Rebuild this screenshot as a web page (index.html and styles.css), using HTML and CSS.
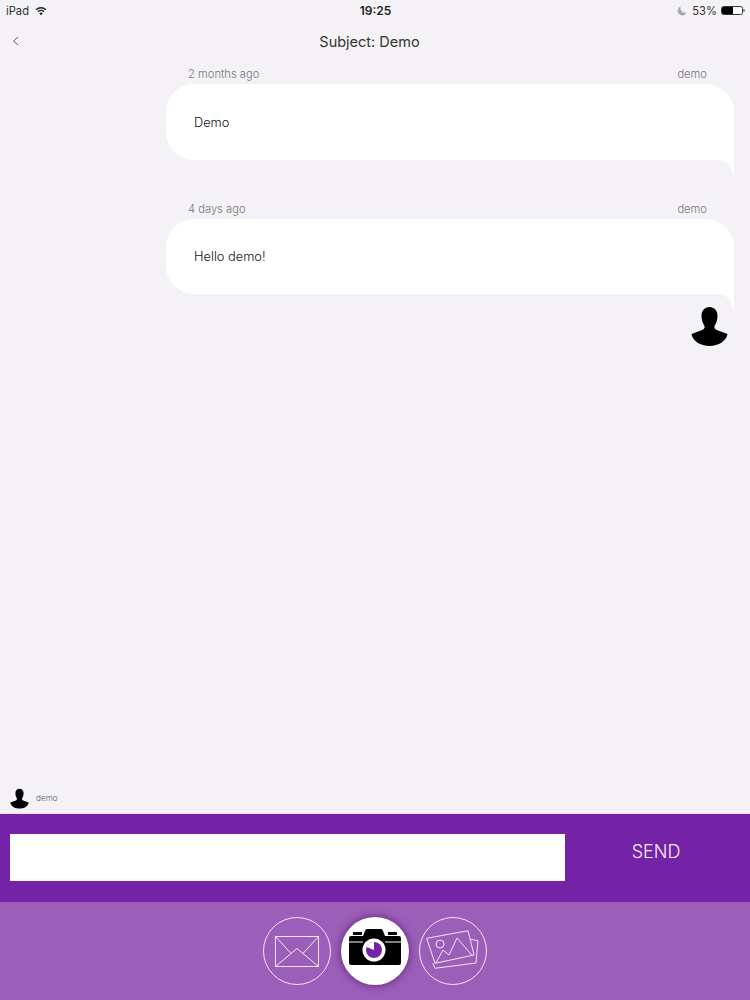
FILE: index.html
```html
<!DOCTYPE html>
<html lang="en">
<head>
  <meta charset="UTF-8" />
  <meta name="viewport" content="width=device-width, initial-scale=1.0"/>
  <title>Subject: Demo</title>
  <link rel="stylesheet" href="styles.css">
</head>
<body>
  <div class="page">
    <div class="status-bar">
      <div class="status-left">
        <span>iPad</span>
        <svg class="wifi" width="12" height="10" viewBox="0 0 14 11">
          <path d="M7 10.6 4.900 8.200a3 3 0 0 1 4.200 0z" fill="#222"/>
          <path d="M3.500 6.400a5 5 0 0 1 7 0M1.300 4a8.200 8.200 0 0 1 11.400 0" fill="none" stroke="#222" stroke-width="1.600"/>
        </svg>
      </div>
      <div class="status-time">19:25</div>
      <div class="status-right">
        <svg class="moon" width="10" height="10" viewBox="0 0 10 10">
          <path d="M3.600.6a4.600 4.600 0 1 0 5.900 6.100A5 5 0 0 1 3.600.6z" fill="#aaa"/>
        </svg>
        <span>53%</span>
        <svg class="battery" width="24" height="9" viewBox="0 0 24 9">
          <rect x=".5" y=".5" width="21" height="8" rx="2" fill="#fff" stroke="#333"/>
          <path d="M1 2.500a1.500 1.500 0 0 1 1.500-1.500H12v7H2.500A1.500 1.500 0 0 1 1 6.500z" fill="#000"/>
          <path d="M22.500 3c.9.200 1.200.8 1.200 1.500s-.3 1.300-1.200 1.500z" fill="#333"/>
        </svg>
      </div>
    </div>

    <div class="nav-bar">
      <svg class="back" width="7" height="10" viewBox="0 0 7 10">
        <path d="M6 1 1.500 5 6 9" fill="none" stroke="#555" stroke-width="1"/>
      </svg>
      <div class="nav-title">Subject: Demo</div>
    </div>

    <div class="thread">
      <div class="message">
        <div class="meta"><span>2 months ago</span><span>demo</span></div>
        <div class="bubble">Demo</div>
      </div>
      <div class="message">
        <div class="meta"><span>4 days ago</span><span>demo</span></div>
        <div class="bubble">Hello demo!</div>
      </div>
      <svg class="avatar avatar-large" viewBox="0 0 37 40">
        <use href="#person"/>
      </svg>
    </div>

    <div class="sender">
      <svg class="avatar avatar-small" viewBox="0 0 37 40">
        <use href="#person"/>
      </svg>
      <span>demo</span>
    </div>

    <div class="compose">
      <input class="compose-input" type="text" />
      <div class="send">SEND</div>
    </div>

    <div class="tabs">
      <div class="tab">
        <svg width="44" height="31" viewBox="0 0 44 31" fill="none" stroke="#f6e3f7" stroke-width="1">
          <rect x=".5" y=".5" width="43" height="30"/>
          <path d="M.5 30.500 22 12.500l21.500 18M.5.5 16 17.500M43.500.5 28 17.500"/>
        </svg>
      </div>
      <div class="tab tab-active">
        <svg width="52" height="44" viewBox="0 0 52 44">
          <path d="M4 3h9v3H4zM39 3h9v3h-9zM14 7l2-5c.3-1 1-2 2-2h14c1 0 1.700 1 2 2l2 5h14a2 2 0 0 1 2 2v25a2 2 0 0 1-2 2H2a2 2 0 0 1-2-2V9a2 2 0 0 1 2-2z" fill="#000"/>
          <path d="M0 13h14M36 13h16" stroke="#fff" stroke-width="1"/>
          <circle cx="25" cy="21" r="11.500" fill="#fff"/>
          <circle cx="25" cy="21" r="8" fill="#7422a6"/>
          <path d="M25 21v-8a8 8 0 0 0-7.500 5z" fill="#fff"/>
        </svg>
      </div>
      <div class="tab">
        <svg width="54" height="44" viewBox="0 0 54 44" fill="none" stroke="#f6e3f7" stroke-width="1">
          <path d="M.7 9.300 42 1.700 48 26 9 34.300z"/>
          <path d="M44 10.300 52 11.700 50 34 9 39.300 6.700 34"/>
          <circle cx="14" cy="15" r="4"/>
          <path d="M10 33.700 17 21l6 5 8-17 14.700 17"/>
        </svg>
      </div>
    </div>
  </div>

  <svg class="sprites" width="0" height="0">
    <symbol id="person" viewBox="0 0 37 40">
      <path d="M18.500 1c4.800 0 8 3.500 8 9 0 4.500-1.500 7.500-3 10-.8 2 1 3.500 3.500 4.500 3.300 1.300 6.500 2.500 9.500 3.500C35.500 35 27.500 40 18.500 40S1.500 35 .5 28c3-1 6.200-2.200 9.500-3.500 2.500-1 4.300-2.500 3.500-4.500-1.500-2.500-3-5.500-3-10 0-5.500 3.200-9 8-9z" fill="#000"/>
    </symbol>
  </svg>
</body>
</html>
```

FILE: styles.css
```css
* {
  box-sizing: border-box;
}

body {
  margin: 0;
  font-family: 'Inter', 'Liberation Sans', sans-serif;
  background: #f4f2f7;
  color: #222;
}

.page {
  display: flex;
  flex-direction: column;
  height: 1000px;
  overflow: hidden;
}

.status-bar {
  display: grid;
  grid-template-columns: 1fr auto 1fr;
  align-items: center;
  height: 21px;
  padding: 0 5px 0 6px;
  font-size: 11.200px;
}

.status-left,
.status-right {
  display: flex;
  align-items: center;
  gap: 6px;
  color: #333;
}

.status-right {
  justify-content: flex-end;
}

.status-time {
  font-weight: 600;
  font-size: 12px;
}

.moon {
  margin-right: -1px;
}

.battery {
  margin-left: -2px;
}

.nav-bar {
  display: flex;
  align-items: center;
  justify-content: center;
  height: 40px;
  padding-right: 11px;
  position: relative;
}

.back {
  position: absolute;
  left: 12px;
  top: 15px;
}

.nav-title {
  font-size: 14.500px;
  color: #333;
}

.thread {
  flex: 1;
  display: flex;
  flex-direction: column;
  align-items: flex-end;
  padding: 6px 16px 0 166px;
}

.message {
  width: 568px;
  margin-bottom: 42px;
  align-self: flex-start;
}

.meta {
  display: flex;
  justify-content: space-between;
  height: 17px;
  padding: 0 27px 0 22px;
  font-size: 11.200px;
  line-height: 15px;
  font-weight: 300;
  color: #777;
}

.bubble {
  position: relative;
  height: 76px;
  padding: 0 28px;
  display: flex;
  align-items: center;
  background: #fff;
  border-radius: 28px 28px 0 28px;
  font-size: 12.800px;
  font-weight: 300;
  color: #111;
}

.message + .message .bubble {
  height: 75px;
}

.bubble::after {
  content: "";
  position: absolute;
  right: 0;
  top: 100%;
  width: 18px;
  height: 16px;
  background: radial-gradient(circle at 0 100%, transparent 16.500px, #fff 17.500px);
}

.avatar-large {
  width: 37px;
  height: 40px;
  margin-top: -30px;
  margin-right: 6px;
}

.sender {
  display: flex;
  align-items: center;
  gap: 7px;
  height: 30px;
  padding-left: 10px;
  font-size: 8.200px;
  font-weight: 300;
  color: #555;
}

.avatar-small {
  width: 19px;
  height: 21px;
}

.sprites {
  position: absolute;
}

.compose {
  display: flex;
  align-items: center;
  height: 89px;
  padding-left: 10px;
  background: #7422a6;
  border-top: 1px solid #f6dff5;
}

.compose-input {
  width: 555px;
  height: 47px;
  margin-top: -1px;
  border: 0;
  background: #fff;
}

.send {
  flex: 1;
  padding-right: 3px;
  margin-top: -14px;
  text-align: center;
  font-size: 18px;
  font-weight: 300;
  color: #fbeefb;
}

.tabs {
  display: flex;
  justify-content: center;
  gap: 10px;
  height: 98px;
  padding-top: 15px;
  background: #9c5fb9;
}

.tab {
  display: flex;
  align-items: center;
  justify-content: center;
  width: 68px;
  height: 68px;
  border: 1px solid #f6e3f7;
  border-radius: 50%;
}

.tab-active {
  background: #fff;
  border: 0;
  box-shadow: 0 0 10px rgba(60, 10, 90, 0.7);
}
```
